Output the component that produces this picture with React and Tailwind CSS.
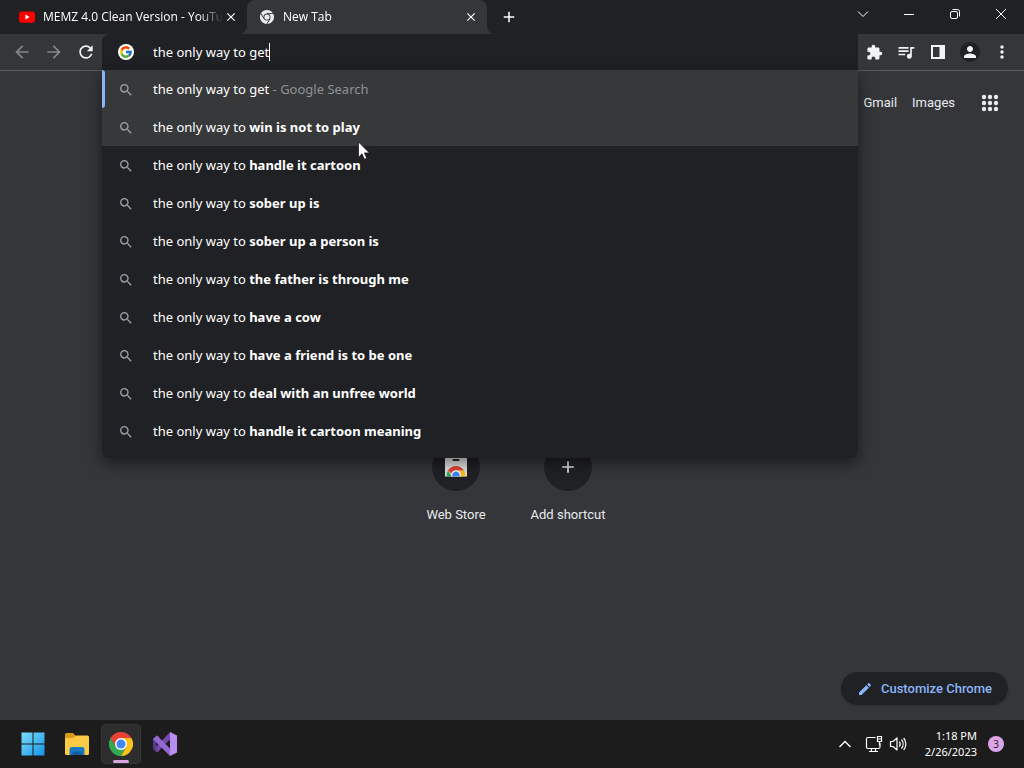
import { useState } from 'react'
import { FcGoogle } from 'react-icons/fc'
import {
  MdAdd,
  MdArrowBack,
  MdArrowForward,
  MdClose,
  MdEdit,
  MdExtension,
  MdMoreVert,
  MdPerson,
  MdQueueMusic,
  MdRefresh,
  MdSearch,
} from 'react-icons/md'

const suggestions = [
  'win is not to play',
  'handle it cartoon',
  'sober up is',
  'sober up a person is',
  'the father is through me',
  'have a cow',
  'have a friend is to be one',
  'deal with an unfree world',
  'handle it cartoon meaning',
]

function YoutubeIcon() {
  return (
    <svg viewBox="0 0 16 16" className="w-4 h-4 shrink-0">
      <rect x="0" y="2.4" width="16" height="11.4" rx="3" fill="#f00" />
      <path d="M6.4 5.6v5L10.6 8.1z" fill="#fff" />
    </svg>
  )
}

function ChromeIcon({ mono = false, className }) {
  const red = mono ? '#e8eaed' : '#ea4335'
  const yellow = mono ? '#e8eaed' : '#fbc116'
  const green = mono ? '#e8eaed' : '#34a853'
  return (
    <svg viewBox="0 0 48 48" className={className}>
      <path d="M24 24H44.8A24 24 0 0 0 3.2 12L13.6 30z" fill={red} />
      <path d="M3.2 12A24 24 0 0 0 24 48L34.4 30 24 24 13.6 30z" fill={green} />
      <path d="M24 12H44.8A24 24 0 0 1 24 48L34.4 30 24 24z" fill={yellow} />
      <path d="M3.2 12A24 24 0 0 1 44.8 12H24z" fill={red} />
      {mono && (
        <path d="M24 12H46M34.4 30L23 49M13.6 30L2.5 11" stroke="#35363a" strokeWidth="3" fill="none" />
      )}
      <circle cx="24" cy="24" r="12" fill={mono ? '#35363a' : '#fff'} />
      <circle cx="24" cy="24" r="9" fill={mono ? '#e8eaed' : '#4285f4'} />
    </svg>
  )
}

function WebStoreIcon() {
  return (
    <svg viewBox="0 0 24 24" className="w-6 h-6">
      <path d="M1 1h22v20.500H1z" fill="#e3e3e3" />
      <rect x="8.500" y="4" width="7" height="2" rx="1" fill="#222" />
      <path d="M2.600 21.500a9.400 9.400 0 0 1 1.300-6L8 21.500z" fill="#34a853" />
      <path d="M3.900 15.500a9.500 9.500 0 0 1 16.200 0H12a5 5 0 0 0-4.600 3z" fill="#ea4335" />
      <path d="M20.100 15.500a9.400 9.400 0 0 1 1.300 6h-5.400l1-3-2-3z" fill="#fbc116" />
      <path d="M7.400 21.500a4.800 4.800 0 1 1 9.200 0z" fill="#fff" />
      <path d="M8.500 21.500a3.700 3.700 0 1 1 7 0z" fill="#4285f4" />
    </svg>
  )
}

function AppsIcon() {
  return (
    <svg viewBox="0 0 24 24" className="w-6 h-6" fill="currentColor">
      {[6, 12, 18].map(y => [6, 12, 18].map(x => <circle key={`${x}-${y}`} cx={x} cy={y} r="2.200" />))}
    </svg>
  )
}

function Tab({ title, icon, active }) {
  return (
    <div
      className={`relative flex items-center w-60 h-[34px] pl-3 pr-2 ${
        active ? 'bg-[#35363a] rounded-t-lg' : ''
      }`}
    >
      {active && (
        <>
          <svg viewBox="0 0 8 8" className="absolute bottom-0 -left-2 w-2 h-2">
            <path d="M8 0v8H0a8 8 0 0 0 8-8z" fill="#35363a" />
          </svg>
          <svg viewBox="0 0 8 8" className="absolute bottom-0 -right-2 w-2 h-2">
            <path d="M0 0v8h8a8 8 0 0 1-8-8z" fill="#35363a" />
          </svg>
        </>
      )}
      {icon}
      <span className="flex-1 ml-2 text-xs whitespace-nowrap [mask-image:linear-gradient(to_right,#000_86%,transparent)]">
        {title}
      </span>
      <button aria-label={`Close ${title}`} className="w-4 h-4 flex items-center justify-center">
        <MdClose className="w-3.5 h-3.5" />
      </button>
    </div>
  )
}

function WindowButton({ label, children }) {
  return (
    <button aria-label={label} className="w-[46px] h-7 flex items-center justify-center">
      <svg viewBox="0 0 12 12" className="w-3 h-3" fill="none" stroke="#fff" strokeWidth="1">
        {children}
      </svg>
    </button>
  )
}

function TabStrip() {
  return (
    <div className="flex bg-[#202124] h-[34px] pl-[7px]">
      <Tab title="MEMZ 4.0 Clean Version - YouTu" icon={<YoutubeIcon />} />
      <Tab title="New Tab" icon={<ChromeIcon mono className="w-4 h-4 p-px shrink-0" />} active />
      <button aria-label="New tab" className="w-7 h-[34px] ml-2 flex items-center justify-center">
        <MdAdd className="w-[18px] h-[18px]" />
      </button>
      <div className="ml-auto flex">
        <WindowButton label="Search tabs">
          <path d="M1 3.500l5 5 5-5" />
        </WindowButton>
        <WindowButton label="Minimize">
          <path d="M1 6.500h10" />
        </WindowButton>
        <WindowButton label="Restore">
          <rect x="1.500" y="3.500" width="7" height="7" rx="1.500" />
          <path d="M3.500 1.500h5a2 2 0 0 1 2 2v5" />
        </WindowButton>
        <WindowButton label="Close">
          <path d="M1 1l10 10M11 1L1 11" />
        </WindowButton>
      </div>
    </div>
  )
}

function ToolButton({ label, dim, children }) {
  return (
    <button
      aria-label={label}
      className={`w-8 h-9 flex items-center justify-center ${dim ? 'text-[#85868a]' : 'text-[#f1f3f4]'}`}
    >
      {children}
    </button>
  )
}

function SuggestionRow({ selected, hovered, children }) {
  return (
    <li className={`relative ${selected || hovered ? 'bg-[#37383a]' : ''}`}>
      {selected && <span className="absolute left-0 top-0 w-[3px] h-full bg-[#8ab4f8] rounded-r" />}
      <button className="w-full h-[38px] pl-4 pt-0.5 flex items-center gap-[19px] text-left whitespace-pre">
        <MdSearch className="w-4 h-4 text-[#9aa0a6]" />
        <span>{children}</span>
      </button>
    </li>
  )
}

function Omnibox() {
  const [query, setQuery] = useState('the only way to get')

  return (
    <div className="relative flex-1 h-9 bg-[#202124] rounded-tl-lg text-[13px] font-['Noto_Sans',sans-serif] z-10">
      <div className="h-full pl-4 flex items-center">
        <span className="w-4 h-4 mr-[19px] rounded-full bg-white flex items-center justify-center">
          <FcGoogle className="w-3.5 h-3.5" />
        </span>
        <input
          aria-label="Search Google or type a URL"
          className="pt-0.5 [field-sizing:content] bg-transparent outline-none caret-transparent"
          value={query}
          onChange={e => setQuery(e.target.value)}
        />
        <span className="w-px h-[18px] bg-white" />
      </div>

      <ul className="absolute top-full left-0 w-full pb-2 bg-[#202124] rounded-b-lg shadow-[0_5px_16px_rgba(0,0,0,0.5)]">
        <SuggestionRow selected>
          {query}
          <span className="text-[#8f9296]"> - Google Search</span>
        </SuggestionRow>
        {suggestions.map((text, i) => (
          <SuggestionRow key={text} hovered={i === 0}>
            the only way to <b>{text}</b>
          </SuggestionRow>
        ))}
      </ul>

      {/* mouse pointer */}
      <svg viewBox="0 0 12 19" className="absolute left-64 top-[107px] w-3 h-[19px]">
        <path
          d="M.5 1v15.200l3.500-3.400 2.400 5.400 2.400-1-2.400-5.300h5z"
          fill="#fff"
          stroke="#111"
          strokeWidth=".7"
        />
      </svg>
    </div>
  )
}

function Toolbar() {
  return (
    <div className="flex px-1.5 h-[37px] border-b border-[#58595c]">
      <ToolButton label="Back" dim>
        <MdArrowBack className="w-5 h-5" />
      </ToolButton>
      <ToolButton label="Forward" dim>
        <MdArrowForward className="w-5 h-5" />
      </ToolButton>
      <ToolButton label="Reload">
        <MdRefresh className="w-5 h-5" />
      </ToolButton>
      <Omnibox />
      <ToolButton label="Extensions">
        <MdExtension className="w-[17px] h-[17px]" />
      </ToolButton>
      <ToolButton label="Media controls">
        <MdQueueMusic className="w-5 h-5" />
      </ToolButton>
      <ToolButton label="Side panel">
        <svg viewBox="0 0 14 14" className="w-3.5 h-3.5">
          <path d="M0 0h14v14H0zM2 2v10h6.500V2z" fill="currentColor" fillRule="evenodd" />
        </svg>
      </ToolButton>
      <ToolButton label="Profile">
        <span className="w-5 h-5 rounded-full bg-[#202124] flex items-center justify-center">
          <MdPerson className="w-[18px] h-[18px]" />
        </span>
      </ToolButton>
      <ToolButton label="Menu">
        <MdMoreVert className="w-5 h-5" />
      </ToolButton>
    </div>
  )
}

function Shortcut({ label, children }) {
  return (
    <a href="#" className="w-28 h-28 pt-4 flex flex-col items-center">
      <span className="w-12 h-12 rounded-full bg-[#202124] flex items-center justify-center">
        {children}
      </span>
      <span className="mt-4 text-[13px] leading-4">{label}</span>
    </a>
  )
}

function NewTabPage() {
  return (
    <main className="flex-1 flex flex-col font-[Roboto,sans-serif] text-[#e8eaed]">
      <nav className="h-16 pr-[22px] flex items-center justify-end gap-[15px] text-[13px]">
        <a href="#">Gmail</a>
        <a href="#">Images</a>
        <button aria-label="Google apps" className="ml-2">
          <AppsIcon />
        </button>
      </nav>
      <div className="mt-[292px] flex justify-center">
        <Shortcut label="Web Store">
          <WebStoreIcon />
        </Shortcut>
        <Shortcut label="Add shortcut">
          <MdAdd className="w-5 h-5" />
        </Shortcut>
      </div>
      <button className="mt-auto mb-[15px] mr-4 self-end h-[33px] px-4 rounded-full bg-[#202124] text-[#8ab4f8] text-[13px] font-medium flex items-center gap-2 shadow">
        <MdEdit className="w-4 h-4" />
        Customize Chrome
      </button>
    </main>
  )
}

function TaskbarButton({ label, active, children }) {
  return (
    <button
      aria-label={label}
      className={`relative w-10 h-10 rounded flex items-center justify-center ${
        active ? 'bg-[#2d2d2d] border border-[#353535]' : ''
      }`}
    >
      {children}
      {active && <span className="absolute bottom-0 w-4 h-[3px] rounded-full bg-[#dca4e0]" />}
    </button>
  )
}

function Taskbar() {
  return (
    <footer className="h-12 pl-[13px] pr-5 bg-[#1c1c1c] flex items-center gap-1">
      <TaskbarButton label="Start">
        <svg viewBox="0 0 24 24" className="w-6 h-6">
          <defs>
            <linearGradient id="win" x1="0" y1="0" x2="24" y2="24" gradientUnits="userSpaceOnUse">
              <stop offset="0" stopColor="#7fe0fb" />
              <stop offset="1" stopColor="#1292e6" />
            </linearGradient>
          </defs>
          <path d="M.5.5h11v11H.5zM12.500.5h11v11h-11zM.5 12.500h11v11H.5zM12.500 12.500h11v11h-11z" fill="url(#win)" />
        </svg>
      </TaskbarButton>
      <TaskbarButton label="File Explorer">
        <svg viewBox="0 0 26 24" className="w-[26px] h-6">
          <path d="M1 2.500A1.500 1.500 0 0 1 2.500 1H9l3 3v5H1z" fill="#d99b17" />
          <path d="M1 6h8l3-2.500h11.500A1.500 1.500 0 0 1 25 5v16.500a1.500 1.500 0 0 1-1.500 1.500h-21A1.500 1.500 0 0 1 1 21.500z" fill="#fccb45" />
          <path d="M5.500 23v-5.500A2.500 2.500 0 0 1 8 15h10a2.500 2.500 0 0 1 2.500 2.500V23z" fill="#1878c2" />
          <path d="M8.500 19.500h9V23h-9z" fill="#125d9c" />
        </svg>
      </TaskbarButton>
      <TaskbarButton label="Google Chrome" active>
        <ChromeIcon className="w-6 h-6" />
      </TaskbarButton>
      <TaskbarButton label="Visual Studio">
        <svg viewBox="0 0 24 24" className="w-6 h-6">
          <path d="M0 7l4-3.500 2.500 1.500L3.500 9v6l3 4L4 20.500 0 17z" fill="#5b3a8c" />
          <path d="M4 20.500L17 7.500V0L3 15z" fill="#7448ad" />
          <path d="M4 3.500L0 7l17 17v-7.500z" fill="#9468d0" />
          <path d="M17 0l7 3.500v17L17 24z" fill="#b88cf0" />
        </svg>
      </TaskbarButton>

      <div className="ml-auto flex items-center text-white">
        <button aria-label="Show hidden icons" className="mr-3.5">
          <svg viewBox="0 0 12 8" className="w-3 h-2" fill="none" stroke="currentColor" strokeWidth="1.300">
            <path d="M.5 7L6 1.500 11.500 7" />
          </svg>
        </button>
        <button aria-label="Network and volume" className="flex items-center gap-1.5 mr-[15px]">
          <svg viewBox="0 0 18 18" className="w-[18px] h-[18px]" fill="none" stroke="currentColor" strokeWidth="1.200">
            <path d="M10.500 2.500H3A1.500 1.500 0 0 0 1.500 4v8A1.500 1.500 0 0 0 3 13.500h10.500a1.500 1.500 0 0 0 1.500-1.500V8M4 16.500h9M6.500 13.500v3M10.500 13.500v3" />
            <path d="M12.500 1.500h4v5h-4zM12.500 4h4M14.500 6.500v4" />
          </svg>
          <svg viewBox="0 0 18 18" className="w-[18px] h-[18px]" fill="none" stroke="currentColor" strokeWidth="1.200">
            <path d="M1.500 6.500h2.500L8 3v12l-4-3.500H1.500z" strokeLinejoin="round" />
            <path d="M10.300 6.500a4 4 0 0 1 0 5M12.500 4.500a7 7 0 0 1 0 9M14.700 3a9.500 9.500 0 0 1 0 12" />
          </svg>
        </button>
        <button className="min-w-[55px] text-[11px] leading-4 text-right mr-[11px] font-['Noto_Sans',sans-serif]">
          1:18 PM
          <br />
          2/26/2023
        </button>
        <span className="w-4 h-4 rounded-full bg-[#dca4e8] text-[#222] text-[10px] leading-4 text-center">
          3
        </span>
      </div>
    </footer>
  )
}

export default function App() {
  return (
    <div className="min-h-screen flex flex-col bg-[#35363a] text-white font-['Open_Sans',sans-serif]">
      <header>
        <TabStrip />
        <Toolbar />
      </header>
      <NewTabPage />
      <Taskbar />
    </div>
  )
}
